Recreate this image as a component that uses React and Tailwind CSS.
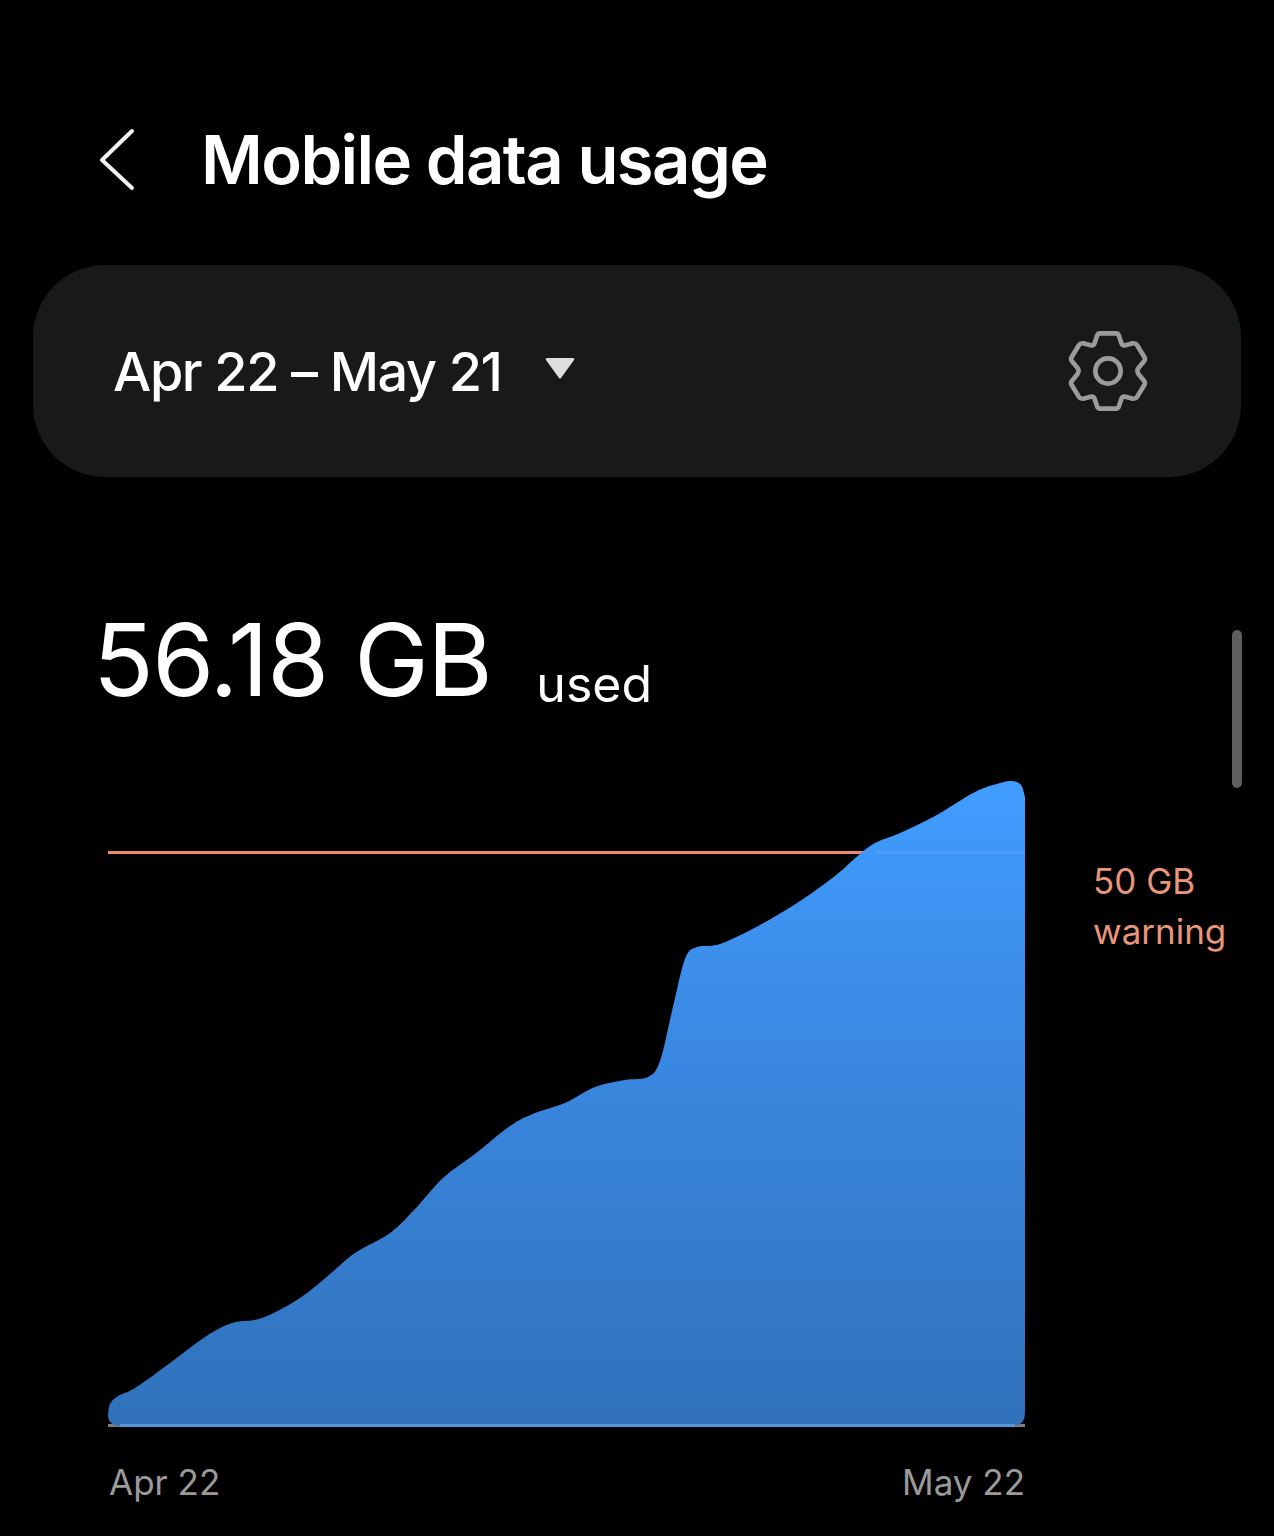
// App.jsx - Mobile data usage screen
const sans = "font-['Inter','Roboto','Liberation_Sans',sans-serif]"

// curve outline in page pixels, smoothed into a path below
const curve = [
  [108, 1414], [110, 1403], [118, 1395], [135, 1387], [170, 1362], [205, 1336], [232, 1322], [262, 1317],
  [300, 1297], [330, 1273], [355, 1252], [390, 1232], [415, 1208], [443, 1177], [475, 1153],
  [510, 1125], [535, 1112], [565, 1102], [595, 1086], [625, 1079], [648, 1076], [660, 1060],
  [672, 1010], [685, 958], [697, 946], [720, 943], [760, 924], [800, 900], [835, 875],
  [870, 845], [900, 832], [935, 815], [975, 791], [1000, 782], [1012, 780], [1021, 784], [1025, 796],
]

const smoothPath = (pts) => {
  let d = `M${pts[0][0]} ${pts[0][1]}`
  for (let i = 0; i < pts.length - 1; i++) {
    const p0 = pts[i - 1] || pts[i]
    const p1 = pts[i]
    const p2 = pts[i + 1]
    const p3 = pts[i + 2] || p2
    const c1x = p1[0] + (p2[0] - p0[0]) / 6
    const c1y = p1[1] + (p2[1] - p0[1]) / 6
    const c2x = p2[0] - (p3[0] - p1[0]) / 6
    const c2y = p2[1] - (p3[1] - p1[1]) / 6
    d += ` C${c1x} ${c1y} ${c2x} ${c2y} ${p2[0]} ${p2[1]}`
  }
  return d
}

function Chart() {
  const area = `${smoothPath(curve)} L1025 1412 Q1025 1425 1012 1425 L122 1425 Q108 1425 108 1414 Z`
  return (
    <svg width="920" height="652" viewBox="108 778 920 652" className="block shrink-0">
      <defs>
        <linearGradient id="fill" x1="0" y1="780" x2="0" y2="1425" gradientUnits="userSpaceOnUse">
          <stop offset="0" stopColor="#409dff" />
          <stop offset="0.35" stopColor="#3b8be6" />
          <stop offset="1" stopColor="#3071ba" />
        </linearGradient>
      </defs>
      <rect x="108" y="850" width="800" height="3" fill="#ec8a6c" />
      <rect x="108" y="1423" width="917" height="3" fill="#7d7d7d" />
      <path d={area} fill="url(#fill)" />
      <rect x="875" y="850" width="150" height="3" fill="#ffffff" opacity="0.06" />
      <rect x="120" y="1423" width="895" height="3" fill="#5b97d8" />
    </svg>
  )
}

function GearIcon() {
  return (
    <svg width="80" height="80" viewBox="85 70 240 240" fill="none" stroke="#9b9b9b" strokeWidth="14" strokeLinejoin="round">
      <path d="M182 77 L228 77 Q236 77 238 85 L245 106 Q248 115 257 113 L280 107 Q288 106 292 112 L314 148 Q318 155 313 161 L297 180 Q290 190 297 200 L313 219 Q318 225 314 232 L292 268 Q288 274 280 273 L257 267 Q248 265 245 274 L238 295 Q236 303 228 303 L182 303 Q174 303 172 295 L165 274 Q162 265 153 267 L130 273 Q122 274 118 268 L96 232 Q92 225 97 219 L113 200 Q120 190 113 180 L97 161 Q92 155 96 148 L118 112 Q122 106 130 107 L153 113 Q162 115 165 106 L172 85 Q174 77 182 77 Z" />
      <circle cx="205" cy="190" r="38" />
    </svg>
  )
}

export default function App() {
  return (
    <div className={`relative h-[1536px] w-full overflow-hidden bg-black text-white ${sans}`}>
      {/* 상단 제목 */}
      <header className="flex h-[265px] items-start pl-[99px] pt-[128px]">
        <svg width="36" height="64" viewBox="0 0 36 64" fill="none" stroke="#f2f2f2" strokeWidth="4" strokeLinecap="round" strokeLinejoin="round" className="shrink-0">
          <path d="M33 3 L3 32 L33 60" />
        </svg>
        <h1 className="ml-[66px] text-[67px] font-semibold leading-[64px] tracking-[-1.6px] whitespace-nowrap">Mobile data usage</h1>
      </header>

      {/* 기간 선택 */}
      <div className="mx-[33px] flex h-[212px] items-center rounded-[72px] bg-[#18191b] pl-[80px] pr-[93px]">
        <span className="text-[54px] font-medium tracking-[-1.4px] whitespace-nowrap">Apr 22 – May 21</span>
        <svg width="30" height="22" viewBox="0 0 30 22" className="ml-[43px] mb-[6px]">
          <path d="M2 1 L28 1 Q30 1 29 3 L16 21 Q15 22 14 21 L1 3 Q0 1 2 1 Z" fill="#dedede" />
        </svg>
        <div className="ml-auto flex">
          <GearIcon />
        </div>
      </div>

      {/* 사용량 */}
      <div className="flex h-[302px] items-start pl-[93px] pt-[123px]">
        <span className="text-[100px] font-normal leading-[120px] tracking-[-1.5px] whitespace-nowrap">56.18 GB</span>
        <span className="ml-[45px] mt-[52px] text-[50px] leading-[64px]">used</span>
      </div>

      {/* 그래프 */}
      <div className="flex pl-[108px]">
        <Chart />
        <div className="ml-[65px] mt-[77px] text-[35px] leading-[50px] text-[#e8957a]">
          <div>50 GB</div>
          <div>warning</div>
        </div>
      </div>

      {/* 날짜 축 */}
      <div className="mt-[27px] flex w-[916px] ml-[109px] justify-between text-[35px] leading-[48px] text-[#9a9a9a]">
        <span>Apr 22</span>
        <span>May 22</span>
      </div>

      {/* 스크롤바 */}
      <div className="absolute left-[1232px] top-[630px] h-[158px] w-[10px] rounded-full bg-[#5f5f5f]" />
    </div>
  )
}
